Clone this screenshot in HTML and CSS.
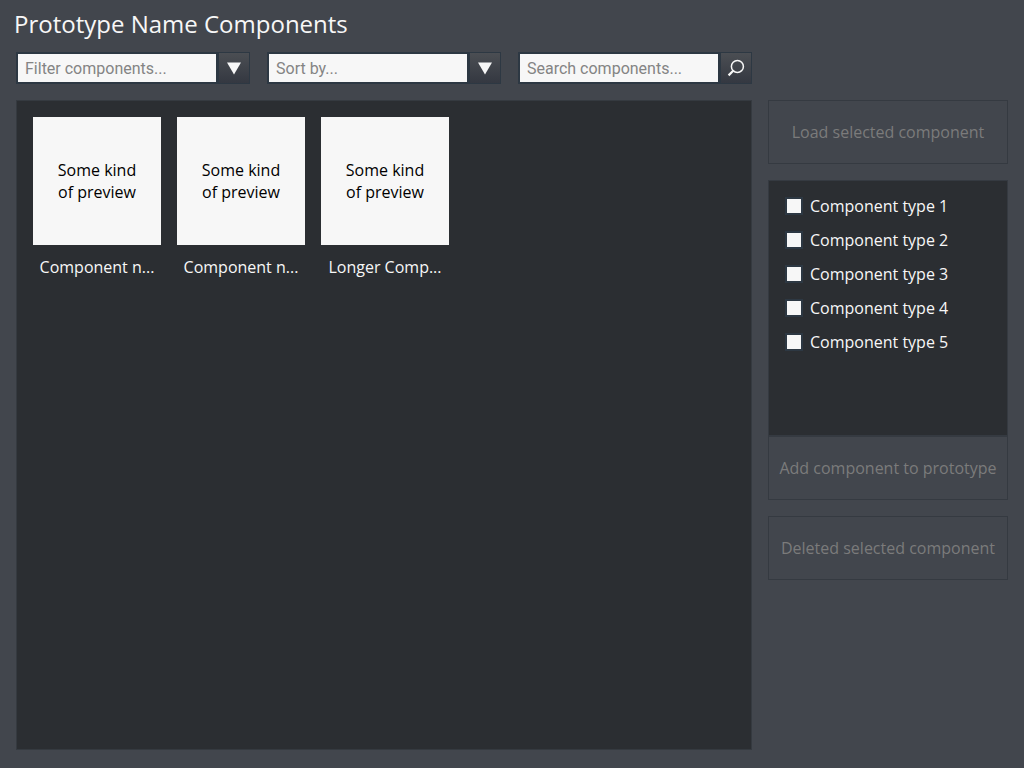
FILE: index.html
```
<!DOCTYPE html>
<html lang="en">
<head>
<meta charset="utf-8">
<meta name="viewport" content="width=device-width, initial-scale=1">
<title>Prototype Name Components</title>
<link rel="stylesheet" href="styles.css">
</head>
<body>
<div class="page">
  <h1 class="title">Prototype Name Components</h1>
  <main class="layout">
    <form class="toolbar">
      <div class="field">
        <input class="field-input" type="text" placeholder="Filter components..." aria-label="Filter components">
        <button class="field-button" type="button" aria-label="Show filters">
          <svg class="icon" viewBox="0 0 20 20" aria-hidden="true"><path d="M3 4.5H17L10 16.5Z" fill="currentColor"/></svg>
        </button>
      </div>
      <div class="field">
        <input class="field-input" type="text" placeholder="Sort by..." aria-label="Sort by">
        <button class="field-button" type="button" aria-label="Show sort options">
          <svg class="icon" viewBox="0 0 20 20" aria-hidden="true"><path d="M3 4.5H17L10 16.5Z" fill="currentColor"/></svg>
        </button>
      </div>
      <div class="field">
        <input class="field-input" type="text" placeholder="Search components..." aria-label="Search components">
        <button class="field-button" type="button" aria-label="Search">
          <svg class="icon" viewBox="0 0 20 20" aria-hidden="true"><g fill="none" stroke="currentColor"><circle cx="11.4" cy="8.4" r="6" stroke-width="1.5"/><path d="M7.2 12.8L2.6 17.4" stroke-width="2.2"/></g></svg>
        </button>
      </div>
    </form>
    <section class="gallery" aria-label="Components">
      <figure class="card">
        <div class="preview">Some kind<br>of preview</div>
        <figcaption class="card-name">Component n...</figcaption>
      </figure>
      <figure class="card">
        <div class="preview">Some kind<br>of preview</div>
        <figcaption class="card-name">Component n...</figcaption>
      </figure>
      <figure class="card">
        <div class="preview">Some kind<br>of preview</div>
        <figcaption class="card-name">Longer Comp...</figcaption>
      </figure>
    </section>
    <aside class="sidebar">
      <button class="action" type="button" disabled>Load selected component</button>
      <div class="add-group">
        <div class="types">
          <label class="type"><input class="check" type="checkbox">Component type 1</label>
          <label class="type"><input class="check" type="checkbox">Component type 2</label>
          <label class="type"><input class="check" type="checkbox">Component type 3</label>
          <label class="type"><input class="check" type="checkbox">Component type 4</label>
          <label class="type"><input class="check" type="checkbox">Component type 5</label>
        </div>
        <button class="action" type="button" disabled>Add component to prototype</button>
      </div>
      <button class="action" type="button" disabled>Deleted selected component</button>
    </aside>
  </main>
</div>
</body>
</html>
```

FILE: styles.css
```
*, *::before, *::after {
  box-sizing: border-box;
}

body {
  margin: 0;
  background: #42464d;
  color: #f7f7f7;
  font: 16px/22px "Open Sans", "Noto Sans", sans-serif;
}

.page {
  display: flex;
  flex-direction: column;
  min-height: 100vh;
  padding: 8px 16px 18px 16px;
}

.title {
  margin: 0 -2px 12px;
  font-size: 24px;
  font-weight: 400;
  line-height: 32px;
}

.layout {
  flex: 1;
  display: grid;
  grid-template-columns: minmax(0, 1fr) 240px;
  grid-template-rows: auto 1fr;
  gap: 16px;
}

.toolbar {
  grid-column: 1;
  display: flex;
  gap: 17px;
}

.field {
  flex: 1;
  display: flex;
  min-width: 0;
  height: 32px;
}

.field-input {
  flex: 1;
  min-width: 0;
  padding: 0 7px;
  border: 2px solid #2d3843;
  border-radius: 0;
  background: #f7f7f7;
  color: #222222;
  font: 16px Roboto, sans-serif;
}

.field-input::placeholder {
  color: #848484;
  opacity: 1;
}

.field-button {
  display: flex;
  align-items: center;
  justify-content: center;
  width: 32px;
  padding: 0;
  border: 1px solid #2d3843;
  background: linear-gradient(#4b4e53, #343841);
  color: #f7f7f7;
}

.icon {
  width: 20px;
  height: 20px;
}

.gallery {
  grid-column: 1;
  grid-row: 2;
  display: flex;
  flex-wrap: wrap;
  align-content: flex-start;
  gap: 16px;
  padding: 16px;
  border: 1px solid #353a40;
  background: #2b2e32;
}

.card {
  width: 128px;
  margin: 0;
}

.preview {
  display: flex;
  align-items: center;
  justify-content: center;
  height: 128px;
  background: #f7f7f7;
  color: #000000;
  text-align: center;
}

.card-name {
  padding: 11px 4px 0;
  overflow: hidden;
  text-align: center;
  text-overflow: ellipsis;
  white-space: nowrap;
}

.sidebar {
  grid-column: 2;
  grid-row: 2;
  display: flex;
  flex-direction: column;
  gap: 16px;
}

.action {
  width: 100%;
  height: 64px;
  padding: 0;
  border: 1px solid #353a41;
  background: #42464d;
  color: #7b7b7b;
  font: inherit;
}

.types {
  display: flex;
  flex-direction: column;
  gap: 12px;
  min-height: 256px;
  padding: 14px 16px;
  border: 1px solid #353a41;
  background: #2b2e32;
}

.type {
  display: flex;
  align-items: center;
  gap: 7px;
}

.check {
  appearance: none;
  width: 18px;
  height: 18px;
  margin: 0;
  border: 2px solid #2d3843;
  background: #f7f7f7;
}

.check:checked {
  background: #4f87b8;
}
```
